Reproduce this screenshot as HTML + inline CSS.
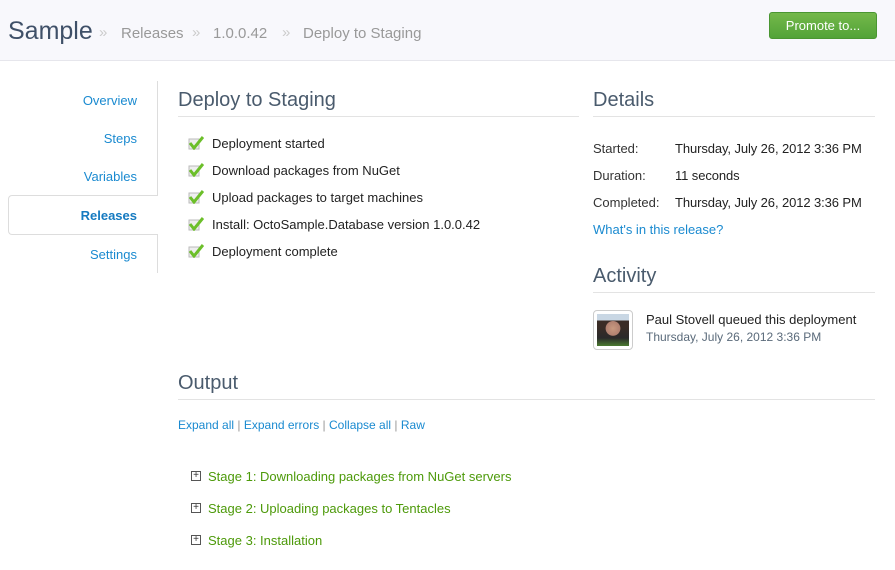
<!DOCTYPE html>
<html><head><style>
*{margin:0;padding:0;box-sizing:border-box}
body{width:895px;height:570px;background:#fff;font-family:"Liberation Sans","DejaVu Sans",sans-serif;font-size:13px;color:#222;position:relative;overflow:hidden}
.hdr{position:absolute;left:0;top:0;width:895px;height:61px;background:#f8f8fc;border-bottom:1px solid #e6e6ec}
.abs{position:absolute;white-space:nowrap}
.title{left:8px;top:17px;font-size:25px;color:#3f5068}
.crumb{top:25px;font-size:15px;color:#999}
.sep{top:24px;font-size:15px;color:#ccc}
.btn{left:769px;top:12px;width:108px;height:27px;background:linear-gradient(#74b84a,#52a338);border:1px solid #4a9632;border-radius:3px;color:#fff;font-size:13px;text-align:center;line-height:25px}
.nav a{position:absolute;right:758px;color:#1a8ad0;font-size:13px;text-decoration:none}
.vline{position:absolute;left:157px;top:81px;width:1px;height:192px;background:#ddd}
.tab{position:absolute;left:8px;top:195px;width:150px;height:40px;background:#fff;border:1px solid #ddd;border-right:none;border-radius:4px 0 0 4px}
h2{position:absolute;font-weight:normal;font-size:20px;color:#4a5b6d;border-bottom:1px solid #e3e3e3;padding-bottom:4px}
.chk{position:absolute;left:188px}
.li{position:absolute;left:212px;font-size:13px;color:#222}
.lbl{position:absolute;left:593px;color:#333}
.val{position:absolute;left:675px;color:#222;letter-spacing:-0.1px}
a.l{color:#1a8ad0;text-decoration:none}
.stage{position:absolute;left:208px;color:#4d9a0a;font-size:13px}
.plus{position:absolute;left:191px;width:10px;height:10px;border:1px solid #555;font-size:10px;line-height:8px;text-align:center;color:#333}
</style></head><body>
<div class="hdr"></div>
<div class="abs title">Sample</div>
<div class="abs sep" style="left:99px">»</div>
<div class="abs crumb" style="left:121px">Releases</div>
<div class="abs sep" style="left:192px">»</div>
<div class="abs crumb" style="left:213px">1.0.0.42</div>
<div class="abs sep" style="left:282px">»</div>
<div class="abs crumb" style="left:303px">Deploy to Staging</div>
<div class="abs btn">Promote to...</div>

<div class="vline"></div>
<div class="tab"></div>
<div class="nav">
<a style="top:93px">Overview</a>
<a style="top:131px">Steps</a>
<a style="top:169px">Variables</a>
<a style="top:208px;font-weight:bold;color:#157ac0">Releases</a>
<a style="top:247px">Settings</a>
</div>

<h2 style="left:178px;top:89px;width:401px">Deploy to Staging</h2>
<svg class="chk" style="top:136px" width="16" height="14"><rect x="1" y="3" width="10" height="10" fill="#eee" stroke="#bbb"/><path d="M2 7l4 5 9-11" stroke="#6cbf2a" stroke-width="3" fill="none"/></svg><div class="li" style="top:136px">Deployment started</div>
<svg class="chk" style="top:163px" width="16" height="14"><rect x="1" y="3" width="10" height="10" fill="#eee" stroke="#bbb"/><path d="M2 7l4 5 9-11" stroke="#6cbf2a" stroke-width="3" fill="none"/></svg><div class="li" style="top:163px">Download packages from NuGet</div>
<svg class="chk" style="top:190px" width="16" height="14"><rect x="1" y="3" width="10" height="10" fill="#eee" stroke="#bbb"/><path d="M2 7l4 5 9-11" stroke="#6cbf2a" stroke-width="3" fill="none"/></svg><div class="li" style="top:190px">Upload packages to target machines</div>
<svg class="chk" style="top:217px" width="16" height="14"><rect x="1" y="3" width="10" height="10" fill="#eee" stroke="#bbb"/><path d="M2 7l4 5 9-11" stroke="#6cbf2a" stroke-width="3" fill="none"/></svg><div class="li" style="top:217px">Install: OctoSample.Database version 1.0.0.42</div>
<svg class="chk" style="top:244px" width="16" height="14"><rect x="1" y="3" width="10" height="10" fill="#eee" stroke="#bbb"/><path d="M2 7l4 5 9-11" stroke="#6cbf2a" stroke-width="3" fill="none"/></svg><div class="li" style="top:244px">Deployment complete</div>

<h2 style="left:593px;top:89px;width:282px">Details</h2>
<div class="lbl" style="top:141px">Started:</div><div class="val" style="top:141px">Thursday, July 26, 2012 3:36 PM</div>
<div class="lbl" style="top:168px">Duration:</div><div class="val" style="top:168px">11 seconds</div>
<div class="lbl" style="top:195px">Completed:</div><div class="val" style="top:195px">Thursday, July 26, 2012 3:36 PM</div>
<div class="lbl" style="top:222px"><a class="l">What's in this release?</a></div>

<h2 style="left:593px;top:265px;width:282px">Activity</h2>
<div style="position:absolute;left:593px;top:310px;width:40px;height:40px;border:1px solid #ccc;border-radius:4px;padding:3px;background:#fff"><div style="width:32px;height:32px;background:radial-gradient(circle at 50% 45%,#c89a80 0,#b08070 30%,transparent 32%),linear-gradient(#c9d7e4 0,#c9d7e4 20%,#3a2c26 21%,#3a2c26 40%,#2a2a2a 75%,#4a7a30 100%)"></div></div>
<div class="abs" style="left:646px;top:312px;color:#222">Paul Stovell queued this deployment</div>
<div class="abs" style="left:646px;top:330px;color:#5a6a7a;font-size:12px">Thursday, July 26, 2012 3:36 PM</div>

<h2 style="left:178px;top:372px;width:697px">Output</h2>
<div class="abs" style="left:178px;top:418px;font-size:12px;color:#999"><a class="l">Expand all</a> | <a class="l">Expand errors</a> | <a class="l">Collapse all</a> | <a class="l">Raw</a></div>

<div class="plus" style="top:471px">+</div><div class="stage" style="top:469px">Stage 1: Downloading packages from NuGet servers</div>
<div class="plus" style="top:503px">+</div><div class="stage" style="top:501px">Stage 2: Uploading packages to Tentacles</div>
<div class="plus" style="top:535px">+</div><div class="stage" style="top:533px">Stage 3: Installation</div>
</body></html>
